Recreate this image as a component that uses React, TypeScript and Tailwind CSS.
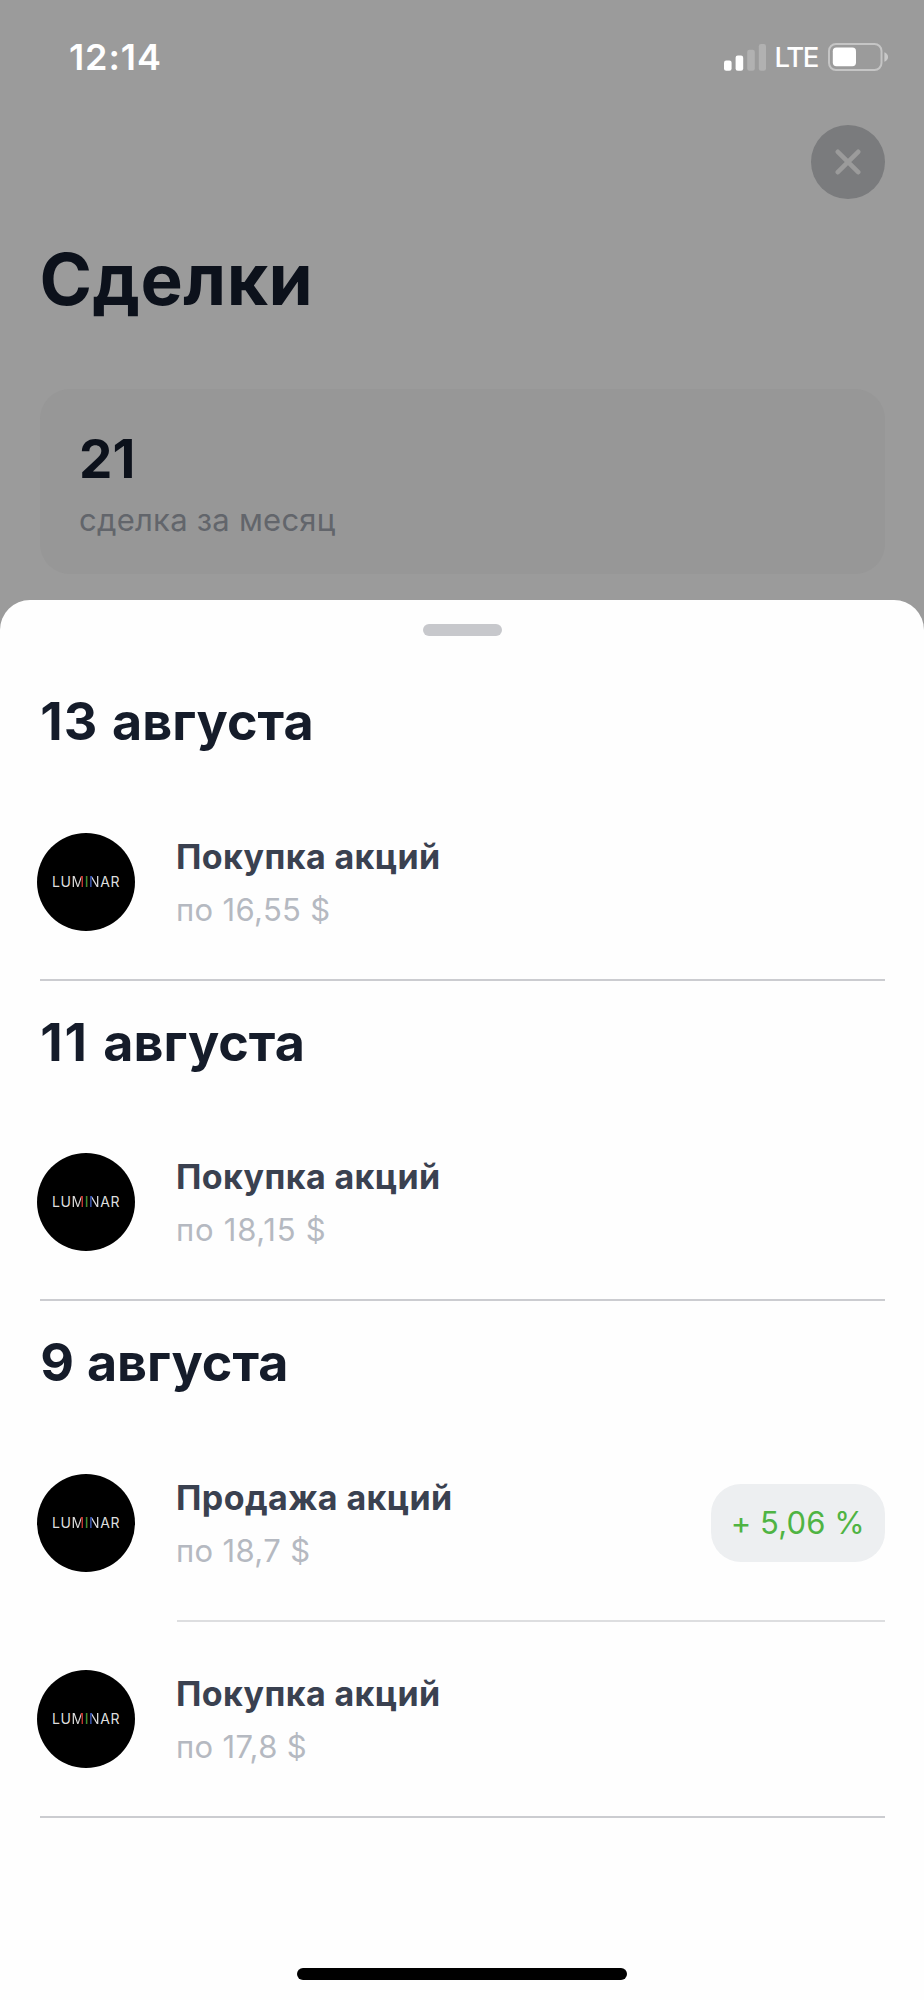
type Deal = { title: string; price: string; priceClass?: string; change?: string };
type Group = { day: string; month: string; dayClass: string; deals: Deal[] };

const groups: Group[] = [
  {
    day: "13",
    month: "августа",
    dayClass: "tracking-[1.2px]",
    deals: [{ title: "Покупка акций", price: "по 16,55 $" }],
  },
  {
    day: "11",
    month: "августа",
    dayClass: "tracking-[2px]",
    deals: [{ title: "Покупка акций", price: "по 18,15 $", priceClass: "tracking-[0.75px]" }],
  },
  {
    day: "9",
    month: "августа",
    dayClass: "tracking-[0.3px]",
    deals: [
      { title: "Продажа акций", price: "по 18,7 $", change: "+ 5,06 %" },
      { title: "Покупка акций", price: "по 17,8 $" },
    ],
  },
];

function SignalIcon() {
  return (
    <svg width="42" height="27" viewBox="0 0 42 27" fill="#fff">
      <rect x="0" y="16.5" width="7.6" height="10.2" rx="2.2" />
      <rect x="11.6" y="11.5" width="7.6" height="15.2" rx="2.2" />
      <rect x="23.2" y="5.7" width="7.6" height="21" rx="2.2" opacity="0.22" />
      <rect x="34.8" y="0" width="7.2" height="26.7" rx="2.2" opacity="0.22" />
    </svg>
  );
}

function BatteryIcon() {
  return (
    <svg width="61" height="28" viewBox="0 0 61 28">
      <rect x="1" y="1" width="52.5" height="26" rx="7" fill="none" stroke="#fff" strokeOpacity="0.42" strokeWidth="2" />
      <rect x="4.8" y="4.6" width="23.2" height="18.6" rx="3.6" fill="#fff" />
      <path d="M56.4 9.2c2.3.9 3.7 2.7 3.7 4.8s-1.4 3.9-3.7 4.8z" fill="#fff" fillOpacity="0.45" />
    </svg>
  );
}

function Logo() {
  return (
    <div className="flex size-[98px] shrink-0 items-center justify-center rounded-full bg-black text-[14px] leading-[16px] tracking-[0.6px] text-[#dedede]">
      <span>LU</span>
      <span className="bg-[linear-gradient(90deg,#dedede_70%,#d63c33_70%)] bg-clip-text text-transparent">M</span>
      <span className="text-[#4f9a3a]">I</span>
      <span className="bg-[linear-gradient(90deg,#4464cc_29%,#dedede_29%)] bg-clip-text text-transparent">N</span>
      <span>AR</span>
    </div>
  );
}

function DealRow({ deal }: { deal: Deal }) {
  return (
    <div className="-ml-[2.5px] flex h-[194.5px] items-center pt-px">
      <Logo />
      <div className="ml-[41px] flex flex-1 flex-col gap-[11px] pt-px">
        <div className="text-[34px] leading-[44px] font-bold tracking-[0.4px] text-[#3a4150]">{deal.title}</div>
        <div className={`text-[31px] leading-[40px] text-[#b5b9c1] ${deal.priceClass ?? "tracking-[0.35px]"}`}>
          {deal.price}
        </div>
      </div>
      {deal.change && (
        <div className="flex h-[78px] w-[173.5px] items-center justify-center rounded-[30px] bg-[#edeff1] text-[31px] tracking-[0.1px] text-[#4fb443]">
          {deal.change}
        </div>
      )}
    </div>
  );
}

export default function App() {
  return (
    <div className="flex h-[2000px] w-full flex-col overflow-hidden bg-[#9b9b9b] font-['Inter',sans-serif]">
      <header className="h-[600px] px-[39.5px] pt-[35px]">
        <div className="flex h-[44px] items-center pl-[29.5px] text-white">
          <span className="text-[36px] leading-[44px] font-semibold tracking-[0.9px]">12:14</span>
          <div className="-mr-[4px] ml-auto flex items-center">
            <SignalIcon />
            <span className="ml-[9px] w-[44px] pt-px text-[27.5px] font-medium tracking-[-1.3px]">LTE</span>
            <span className="ml-[9px]">
              <BatteryIcon />
            </span>
          </div>
        </div>
        <div className="mt-[46px] flex justify-end">
          <button className="flex size-[74px] items-center justify-center rounded-full bg-[#7a7b7d]" aria-label="Закрыть">
            <svg width="26" height="26" viewBox="0 0 26 26" stroke="#9b9b9b" strokeWidth="4.6" strokeLinecap="round">
              <path d="M2.8 2.8l20.4 20.4M23.2 2.8L2.8 23.2" />
            </svg>
          </button>
        </div>
        <h1 className="mt-[38px] text-[71px] leading-[84px] font-bold tracking-[0.5px] text-[#0c111b]">Сделки</h1>
        <div className="mt-[68px] h-[184.5px] rounded-[30px] bg-[#979797] pt-[40px] pl-[39.5px]">
          <div className="text-[53px] leading-[60px] font-bold text-[#0c111b]">21</div>
          <div className="mt-[11px] text-[31px] leading-[40px] tracking-[0.25px] text-[#62656b]">сделка за месяц</div>
        </div>
      </header>
      <main className="flex flex-1 flex-col rounded-t-[30px] bg-[#fefefe] px-[39.5px] pt-[24px] pb-[20px]">
        <div className="h-[12px] w-[79px] self-center rounded-full bg-[#c7c8cc]" />
        <div className="mt-[24px]">
          {groups.map((group) => (
            <section key={group.day} className="pt-[32px]">
              <h2 className="pl-[0.7px] text-[52px] leading-[60px] font-bold text-[#151c2a]">
                <span className={group.dayClass}>{group.day} </span>
                {group.month}
              </h2>
              <div className="mt-[32px]">
                {group.deals.map((deal, i) => (
                  <div key={deal.title}>
                    <DealRow deal={deal} />
                    {i < group.deals.length - 1 ? (
                      <div className="ml-[137.5px] h-[2px] bg-[#dddee0]" />
                    ) : (
                      <div className="h-[2px] bg-[#cbccd0]" />
                    )}
                  </div>
                ))}
              </div>
            </section>
          ))}
        </div>
        <div className="mt-auto h-[12px] w-[330px] self-center rounded-full bg-black" />
      </main>
    </div>
  );
}
